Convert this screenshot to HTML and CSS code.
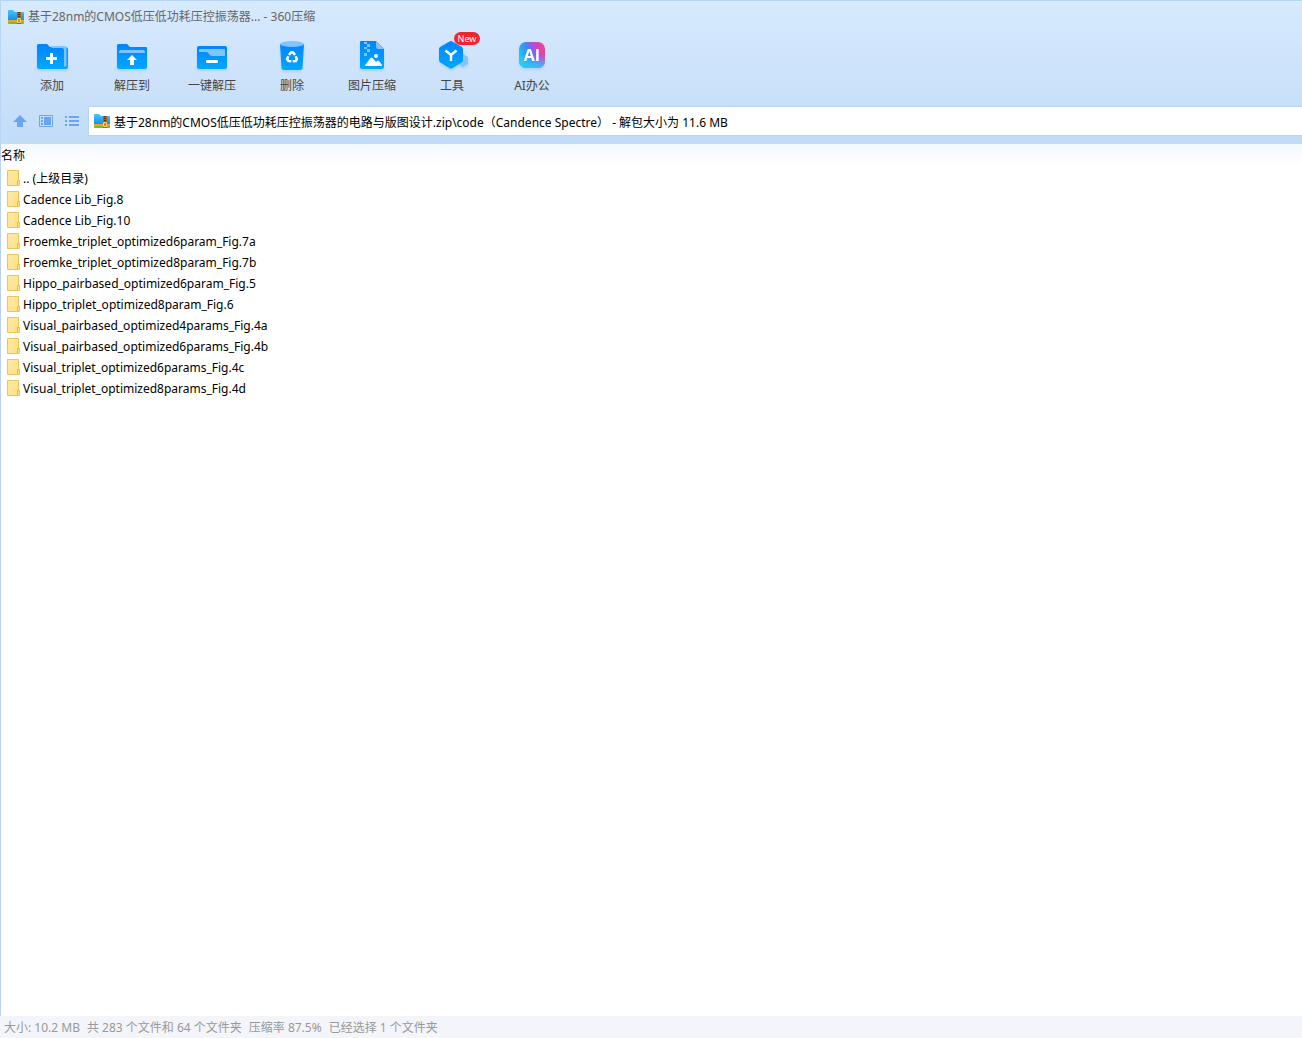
FILE: index.html
```html
<!DOCTYPE html>
<html lang="zh-CN">
<head>
<meta charset="utf-8">
<meta name="viewport" content="width=device-width, initial-scale=1">
<title>360压缩</title>
<link rel="stylesheet" href="styles.css">
</head>
<body>
<svg class="defs" width="0" height="0" aria-hidden="true">
  <defs>
    <linearGradient id="blue" x1="0" y1="0" x2="0" y2="1"><stop offset="0" stop-color="#0084ff"/><stop offset="1" stop-color="#00a8ff"/></linearGradient>
    <linearGradient id="sky" x1="0" y1="0" x2="0" y2="1"><stop offset="0" stop-color="#45c8fb"/><stop offset="1" stop-color="#1689e6"/></linearGradient>
    <linearGradient id="ai" x1="0" y1=".6" x2="1" y2=".2"><stop offset="0" stop-color="#18d4ed"/><stop offset=".38" stop-color="#368cf2"/><stop offset=".65" stop-color="#b34be2"/><stop offset="1" stop-color="#ff4179"/></linearGradient>
    <linearGradient id="aiLow" x1="0" y1="0" x2="0" y2="1"><stop offset=".5" stop-color="#35c4f5" stop-opacity="0"/><stop offset="1" stop-color="#35c4f5"/></linearGradient>
    <linearGradient id="yellow" x1="0" y1="0" x2="1" y2="1"><stop offset="0" stop-color="#ffe9a2"/><stop offset="1" stop-color="#ffdf85"/></linearGradient>
    <symbol id="zip" viewBox="0 0 16 14">
      <path d="M0 1q0-1 1-1h4l2 2h8q1 0 1 1v8H0z" fill="url(#sky)"/>
      <path d="M0 10h16v2H0z" fill="#f9a01b"/><path d="M0 12h16v1q0 1-1 1H1q-1 0-1-1z" fill="#75bc31"/>
      <path d="M9 2h4v12H9z" fill="#b75a13"/><path d="M10 2h2v1h-2zm0 2h2v1h-2zm0 2h2v1h-2z" fill="#6e3009"/>
      <rect x="9" y="8" width="4" height="5" rx="1" fill="#ffd45e"/><path d="M10.500 9h1v3h-1z" fill="#8c4311"/>
    </symbol>
    <symbol id="folder" viewBox="0 0 13 16">
      <path d="M.5.5h11v10h1v5H.5z" fill="url(#yellow)" stroke="#e8c65a"/><path d="M10.500 15v-4.500h2" fill="none" stroke="#e8bd40"/>
    </symbol>
  </defs>
</svg>
<div class="window">
  <header class="chrome">
    <div class="titlebar">
      <svg class="zip-icon"><use href="#zip"/></svg>
      <h1 class="title">基于28nm的CMOS低压低功耗压控振荡器... - 360压缩</h1>
    </div>
    <nav class="toolbar" aria-label="工具栏">
      <button class="tool" type="button">
        <svg class="tool-icon" viewBox="0 0 32 32"><path d="M1 5.500Q1 4 2.500 4H11l3 3h15q3 0 3 3v17q0 2-2 2H3q-2 0-2-2z" fill="url(#blue)"/><path d="M15 6h13.500q2 0 2 2v18.500H28V10q0-2-2-2H16z" fill="#83c4ff"/><path d="M14 13h3v4h4v3h-4v4h-3v-4h-4v-3h4z" fill="#fff"/></svg>
        <span>添加</span>
      </button>
      <button class="tool" type="button">
        <svg class="tool-icon" viewBox="0 0 32 32"><path d="M1 5.500Q1 4 2.500 4H11l3 3h16q1 0 1 1v19q0 2-2 2H3q-2 0-2-2z" fill="url(#blue)"/><path d="M3 12q0-2 2-2h22q2 0 2 2v1H3z" fill="#83c4ff"/><path d="M16 15l5 5h-3v5h-4v-5h-3z" fill="#fff"/></svg>
        <span>解压到</span>
      </button>
      <button class="tool" type="button">
        <svg class="tool-icon" viewBox="0 0 32 32"><rect x="1" y="6" width="30" height="23" rx="2" fill="url(#blue)"/><path d="M3 10q0-1 1-1h24q1 0 1 1v6H16q-2 0-3-2t-3-2H3z" fill="#83c4ff"/><rect x="10" y="20" width="12" height="3" rx="1" fill="#fff"/></svg>
        <span>一键解压</span>
      </button>
      <button class="tool" type="button">
        <svg class="tool-icon" viewBox="0 0 32 32"><path d="M4 4h24l-1.500 24q-.1 2-2.500 2H8q-2.400 0-2.500-2z" fill="url(#blue)"/><ellipse cx="16" cy="4" rx="12" ry="3" fill="#83c4ff"/><g fill="none" stroke="#fff" stroke-width="2.500"><path d="M13 15l1.900-2.500h2.300l1.800 2.500"/><path d="M13 15l1.900-2.500h2.300l1.800 2.500" transform="rotate(120 16 17.500)"/><path d="M13 15l1.900-2.500h2.300l1.800 2.500" transform="rotate(240 16 17.500)"/></g></svg>
        <span>删除</span>
      </button>
      <button class="tool" type="button">
        <svg class="tool-icon" viewBox="0 0 32 32"><path d="M4 2q0-1 1-1h15l8 8v18q0 2-2 2H6q-2 0-2-2z" fill="url(#blue)"/><path d="M20 1l8 8h-6q-2 0-2-2z" fill="#83c4ff"/><path d="M8 2h3v2H8zm3 2h3v3h-3zM8 7h3v2H8zm3 2h3v3h-3zM8 13h3v3H8z" fill="#83c4ff"/><circle cx="20" cy="16" r="2" fill="#fff"/><path d="M9 26q0-1 1-2l4.500-6q1-1 2 0l3.500 4 1-1q1-1 2 0l3 4v1z" fill="#fff"/></svg>
        <span>图片压缩</span>
      </button>
      <button class="tool" type="button">
        <svg class="tool-icon" viewBox="0 0 32 32"><path d="M27 14l5 3v7l-5 3-5-3v-7z" fill="#83c4ff"/><path d="M13.600 1.400q1.400-.8 2.800 0l9.200 5.300q1.400.8 1.400 2.400v11q0 1.600-1.400 2.400l-9.200 5.800q-1.400.8-2.800 0L4.400 22.500Q3 21.700 3 20.100v-11q0-1.600 1.400-2.400z" fill="url(#blue)"/><path d="M9.500 10.500L15 15l5.500-4.500M15 15v6" fill="none" stroke="#fff" stroke-width="2.500"/></svg>
        <span>工具</span>
        <span class="badge">New</span>
      </button>
      <button class="tool" type="button">
        <svg class="tool-icon" viewBox="0 0 32 32"><rect x="3" y="2" width="26" height="26" rx="7" fill="url(#ai)"/><rect x="3" y="2" width="26" height="26" rx="7" fill="url(#aiLow)"/><text class="ai-text" x="16" y="21" text-anchor="middle">AI</text></svg>
        <span>AI办公</span>
      </button>
    </nav>
    <div class="addressbar">
      <div class="nav-buttons">
        <button class="nav-button" type="button" aria-label="上级目录"><svg viewBox="0 0 16 16"><path d="M8 2l7 7h-4v5H5V9H1z" fill="#6ca5ef"/></svg></button>
        <button class="nav-button" type="button" aria-label="预览"><svg viewBox="0 0 16 16"><path d="M1.500 2.500h13v11h-13z" fill="none" stroke="#6ca5ef"/><path d="M3 4h2v2H3zm0 3h2v2H3zm0 3h2v2H3zM6 4h7v8H6z" fill="#6ca5ef"/></svg></button>
        <button class="nav-button" type="button" aria-label="列表"><svg viewBox="0 0 16 16"><path d="M1 3h2v2H1zm4 0h10v2H5zM1 7h2v2H1zm4 0h10v2H5zm-4 4h2v2H1zm4 0h10v2H5z" fill="#6ca5ef"/></svg></button>
      </div>
      <label class="path">
        <svg class="zip-icon" role="img" aria-label="路径"><use href="#zip"/></svg>
        <input class="path-input" type="text" value="基于28nm的CMOS低压低功耗压控振荡器的电路与版图设计.zip\code（Candence Spectre） - 解包大小为 11.6 MB">
      </label>
    </div>
  </header>
  <main class="content">
    <table class="files">
      <thead><tr><th scope="col">名称</th></tr></thead>
      <tbody>
        <tr><td><a class="file" href="#"><svg class="folder"><use href="#folder"/></svg>.. (上级目录)</a></td></tr>
        <tr><td><a class="file" href="#"><svg class="folder"><use href="#folder"/></svg>Cadence Lib_Fig.8</a></td></tr>
        <tr><td><a class="file" href="#"><svg class="folder"><use href="#folder"/></svg>Cadence Lib_Fig.10</a></td></tr>
        <tr><td><a class="file" href="#"><svg class="folder"><use href="#folder"/></svg>Froemke_triplet_optimized6param_Fig.7a</a></td></tr>
        <tr><td><a class="file" href="#"><svg class="folder"><use href="#folder"/></svg>Froemke_triplet_optimized8param_Fig.7b</a></td></tr>
        <tr><td><a class="file" href="#"><svg class="folder"><use href="#folder"/></svg>Hippo_pairbased_optimized6param_Fig.5</a></td></tr>
        <tr><td><a class="file" href="#"><svg class="folder"><use href="#folder"/></svg>Hippo_triplet_optimized8param_Fig.6</a></td></tr>
        <tr><td><a class="file" href="#"><svg class="folder"><use href="#folder"/></svg>Visual_pairbased_optimized4params_Fig.4a</a></td></tr>
        <tr><td><a class="file" href="#"><svg class="folder"><use href="#folder"/></svg>Visual_pairbased_optimized6params_Fig.4b</a></td></tr>
        <tr><td><a class="file" href="#"><svg class="folder"><use href="#folder"/></svg>Visual_triplet_optimized6params_Fig.4c</a></td></tr>
        <tr><td><a class="file" href="#"><svg class="folder"><use href="#folder"/></svg>Visual_triplet_optimized8params_Fig.4d</a></td></tr>
      </tbody>
    </table>
  </main>
  <footer class="status">
    <span>大小: 10.2 MB</span>
    <span>共 283 个文件和 64 个文件夹</span>
    <span>压缩率 87.5%</span>
    <span>已经选择 1 个文件夹</span>
  </footer>
</div>
</body>
</html>
```
FILE: styles.css
```css
* { box-sizing: border-box; }
body { margin: 0; font: 12px/20px "Noto Sans", "Noto Sans CJK SC", sans-serif; color: #000; background: #fff; }
.defs { position: absolute; }
button, input { font: inherit; color: inherit; border: 0; padding: 0; background: none; }
svg { display: block; flex: none; }
.window { min-height: 100vh; display: flex; flex-direction: column; }
.chrome { height: 144px; border-top: 1px solid #b5d4f5; border-left: 1px solid #b9d6f7; background: linear-gradient(#d7eafe, #c9e0f9 70%, #c1dcf8); }
.titlebar { display: flex; align-items: center; gap: 4px; height: 30px; padding: 1px 0 0 7px; }
.zip-icon { width: 16px; height: 14px; }
.title { margin: 0; font-size: 12px; font-weight: 400; color: #666; }
.toolbar { display: flex; height: 75px; padding-left: 11px; }
.tool { position: relative; display: flex; flex-direction: column; align-items: center; width: 80px; padding-top: 9px; gap: 4px; color: #444; white-space: nowrap; }
.tool-icon { width: 32px; height: 32px; filter: drop-shadow(0 2px 1px #3b9bf233); }
.ai-text { font: 700 16px "Open Sans", sans-serif; fill: #fff; }
.badge { position: absolute; top: 1px; left: 42px; width: 26px; height: 13px; border-radius: 7px; background: #f8222c; color: #fff; font-size: 9px; line-height: 13px; }
.addressbar { display: flex; }
.nav-buttons { display: flex; align-items: center; gap: 10px; padding: 0 8px 0 11px; }
.nav-button svg { width: 16px; height: 16px; }
.path { flex: 1; display: flex; align-items: center; gap: 4px; height: 30px; padding-left: 5px; background: #fff; border: 1px solid #b7d5f5; border-right: 0; }
.path-input { flex: 1; min-width: 0; height: 22px; padding-top: 2px; outline: 0; }
.content { flex: 1; border-left: 1px solid #b9d2f3; background: linear-gradient(#f3f9ff, #fff 22px); }
.files { width: 100%; border-collapse: collapse; }
.files th { height: 24px; padding: 0; text-align: left; font-weight: 400; }
.files td { height: 21px; padding: 0 6px; }
.file { display: flex; align-items: center; gap: 3px; height: 21px; color: inherit; text-decoration: none; }
.folder { width: 13px; height: 16px; margin-bottom: 1px; }
.status { display: flex; gap: 7px; height: 22px; padding: 1px 4px 0; line-height: 22px; color: #999; background: #f3f5fa; white-space: nowrap; }
```
